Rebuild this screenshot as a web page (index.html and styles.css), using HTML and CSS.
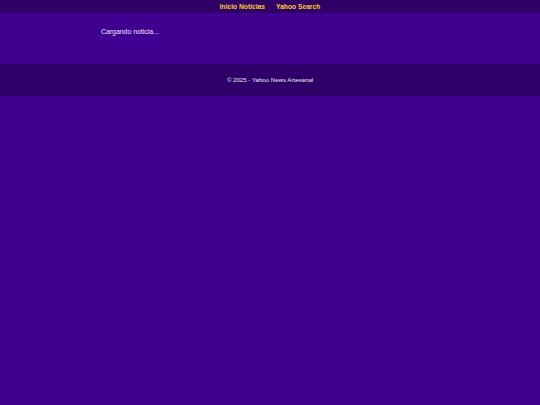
FILE: index.html
```html
<!DOCTYPE html>
<html lang="es">
<head>
<meta charset="utf-8">
<title>Yahoo News Artesanal</title>
<link rel="stylesheet" href="styles.css">
</head>
<body>
<nav class="topnav">
  <a class="nav-link" href="#">Inicio Noticias</a>
  <a class="nav-link" href="#">Yahoo Search</a>
</nav>
<main class="content">
  <div class="container">
    <p class="loading">Cargando noticia...</p>
  </div>
</main>
<footer class="footer">
  <p class="footer-text">© 2025 - Yahoo News Artesanal</p>
</footer>
</body>
</html>
```
FILE: styles.css
```css
html, body {
  margin: 0;
  padding: 0;
  background: #400090;
  font-family: "Liberation Sans", Arial, sans-serif;
  height: 100%;
}
.topnav {
  height: 13px;
  background: #2f0066;
  display: flex;
  justify-content: center;
  align-items: center;
  gap: 11px;
}
.nav-link {
  color: #ffcc33;
  font-weight: bold;
  font-size: 6.7px;
  text-decoration: none;
}
.content {
  height: 51px;
  background: #400090;
}
.container {
  max-width: 338px;
  margin: 0 auto;
  padding-top: 15px;
}
.loading {
  margin: 0;
  color: #eee6ff;
  font-size: 6.9px;
}
.footer {
  height: 32px;
  background: #2f0068;
  display: flex;
  justify-content: center;
  align-items: center;
  padding-bottom: 2px;
  box-sizing: border-box;
}
.footer-text {
  margin: 0;
  color: #e8e8f0;
  font-size: 6.1px;
}
```
